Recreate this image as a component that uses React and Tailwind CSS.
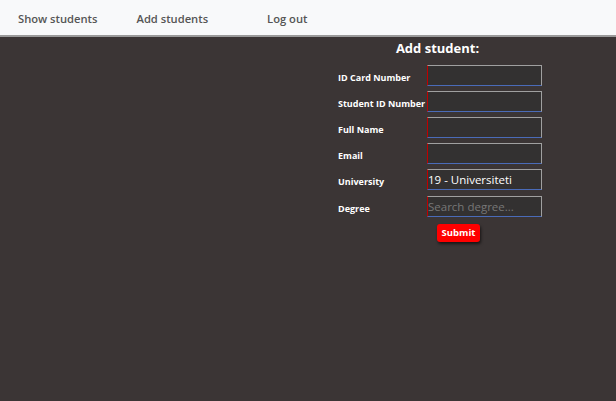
import React from "react";

const rows = [
  { label: "ID Card Number", value: "" },
  { label: "Student ID Number", value: "" },
  { label: "Full Name", value: "" },
  { label: "Email", value: "" },
  { label: "University", value: "19 - Universiteti" },
  { label: "Degree", value: "", placeholder: "Search degree...", extra: true },
];

export default function App() {
  return (
    <div className="w-[616px] h-[401px] bg-[#3b3535] flex flex-col overflow-hidden">
      <nav className="h-[37px] bg-[#f8f9fa] border-b-[2px] border-[#9a9a9a] flex items-center pl-[18px] pt-[3px] text-[11.2px] font-semibold text-[#555] [font-family:'Open_Sans',sans-serif]">
        <span>Show students</span>
        <span className="ml-[39px]">Add students</span>
        <span className="ml-[59px]">Log out</span>
      </nav>
      <div className="flex justify-start pl-[338px] pt-[1px]">
        <div className="w-[204px] flex flex-col">
          <h2 className="text-center pr-[5px] text-[13px] font-bold text-white [font-family:'Open_Sans',sans-serif] leading-[20px] mb-[7px]">
            Add student:
          </h2>
          <div className="flex flex-col gap-[5px]">
            {rows.map((r) => (
              <div key={r.label} className={`flex h-[21px] ${r.extra ? "mt-[1px]" : ""}`}>
                <span className="w-[89px] pt-[7px] text-[9px] font-bold text-white [font-family:'Open_Sans',sans-serif] leading-[12px]">
                  {r.label}
                </span>
                <input
                  readOnly
                  value={r.value}
                  placeholder={r.placeholder || ""}
                  className="w-[115px] h-[21px] bg-[#333131] border border-t-[#a0a0a0] border-r-[#a0a0a0] border-l-[#c00000] border-b-[#4a6bb8] text-[11.5px] text-white placeholder:text-[#777] px-0 outline-none [font-family:'Open_Sans',sans-serif]"
                />
              </div>
            ))}
          </div>
          <div className="flex pl-[99px] mt-[7px]">
            <button className="w-[43px] h-[18px] bg-[#ff0000] rounded-[3px] text-white text-[9.5px] font-bold shadow-[1px_2px_3px_rgba(0,0,0,0.6)] [font-family:'Open_Sans',sans-serif]">
              Submit
            </button>
          </div>
        </div>
      </div>
    </div>
  );
}
